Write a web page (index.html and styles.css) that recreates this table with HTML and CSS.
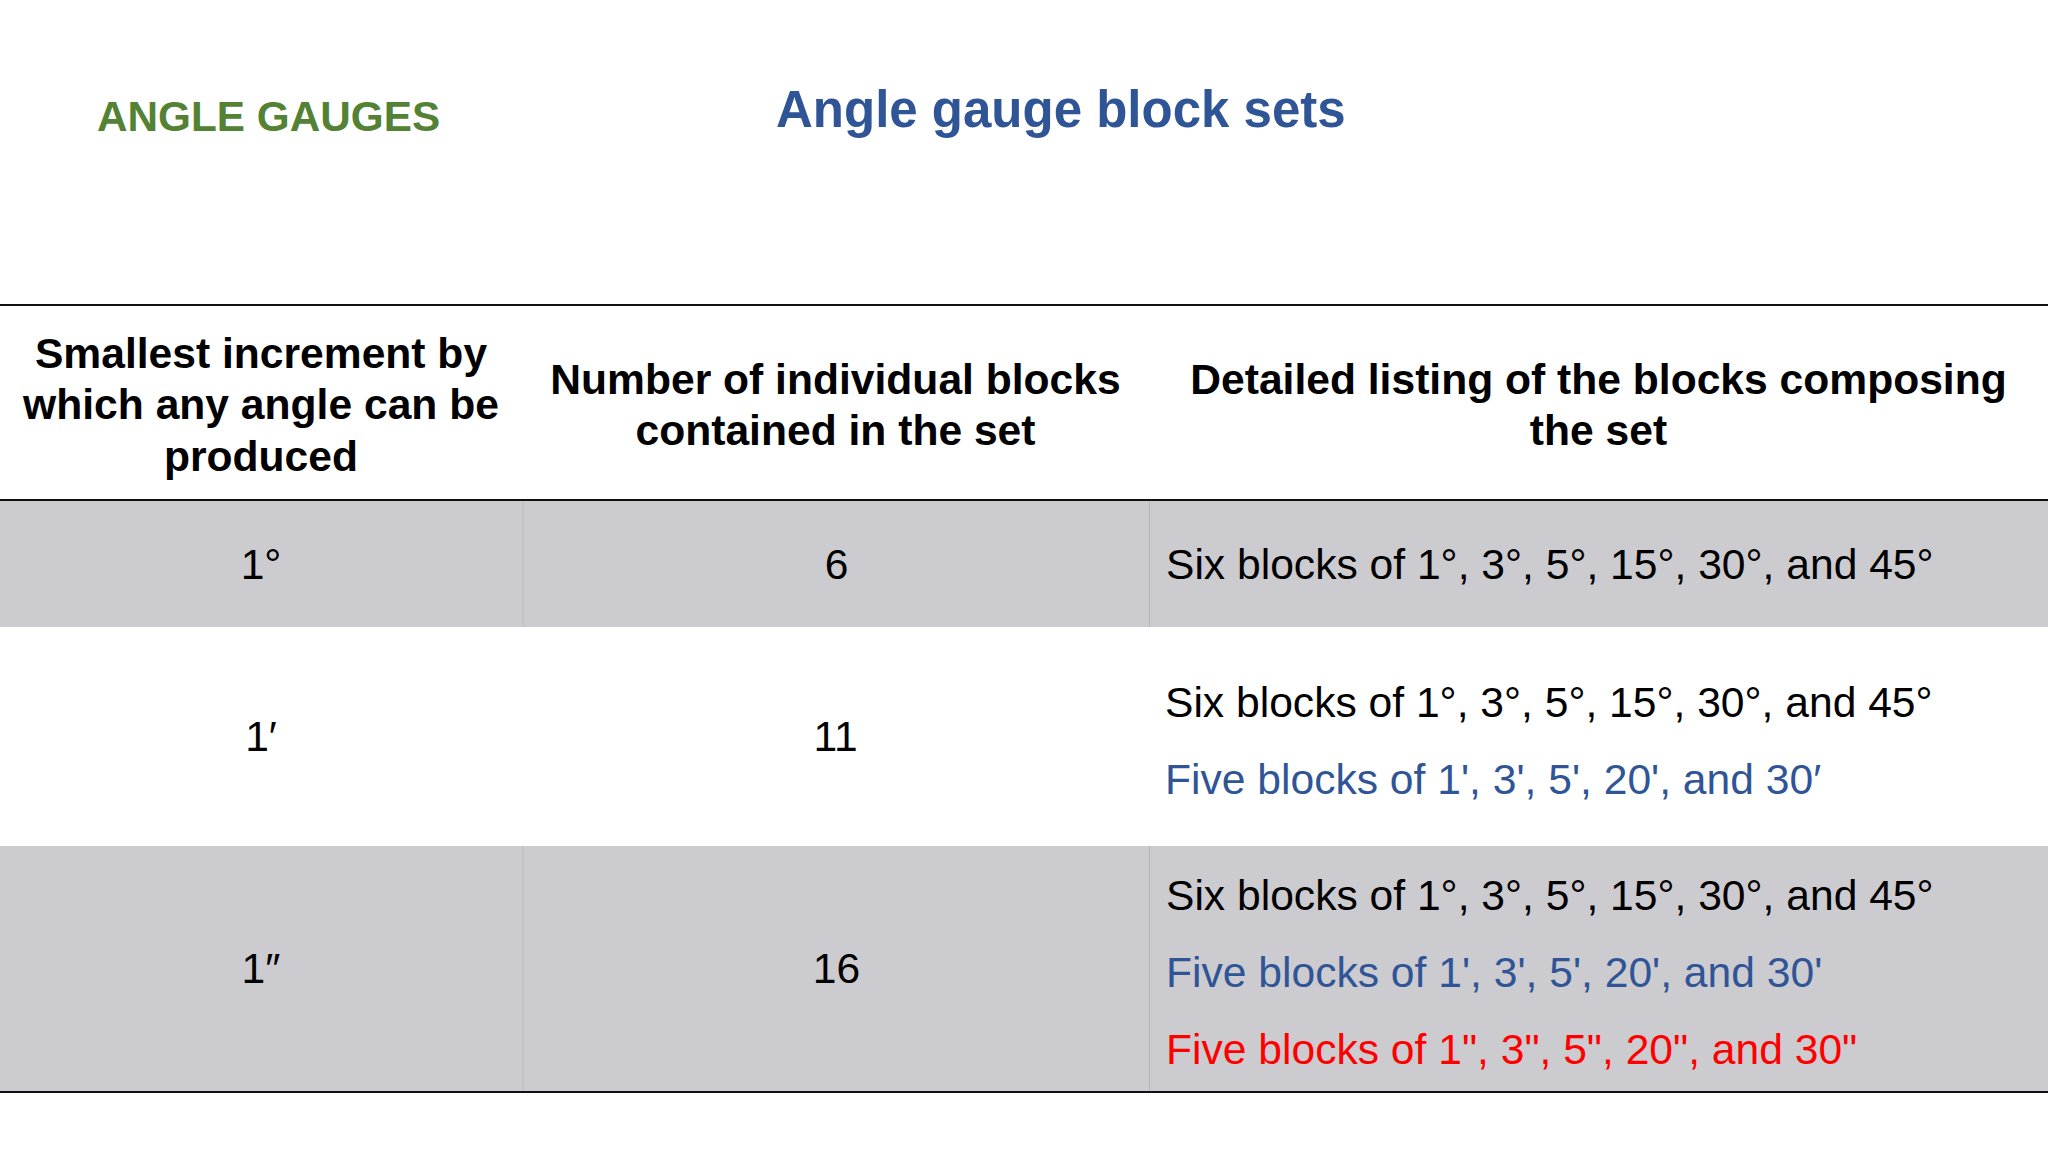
FILE: index.html
```html
<!DOCTYPE html>
<html lang="en">
<head>
<meta charset="utf-8">
<title>Angle gauge block sets</title>
<link rel="stylesheet" href="styles.css">
</head>
<body>
<div class="slide">
  <header class="top">
    <div class="section-label">ANGLE GAUGES</div>
    <h1 class="title">Angle gauge block sets</h1>
  </header>
  <div class="table">
    <div class="row head">
      <div class="cell c1"><span>Smallest increment by which any angle can be produced</span></div>
      <div class="cell c2"><span>Number of individual blocks contained in the set</span></div>
      <div class="cell c3 center"><span>Detailed listing of the blocks composing the set</span></div>
    </div>
    <div class="row shaded r1">
      <div class="cell c1">1°</div>
      <div class="cell c2 sep">6</div>
      <div class="cell c3 sep2 list">
        <div class="black">Six blocks of 1°, 3°, 5°, 15°, 30°, and 45°</div>
      </div>
    </div>
    <div class="row r2">
      <div class="cell c1">1′</div>
      <div class="cell c2">11</div>
      <div class="cell c3 list">
        <div class="black">Six blocks of 1°, 3°, 5°, 15°, 30°, and 45°</div>
        <div class="blue">Five blocks of 1', 3', 5', 20', and 30′</div>
      </div>
    </div>
    <div class="row shaded r3">
      <div class="cell c1">1″</div>
      <div class="cell c2 sep">16</div>
      <div class="cell c3 sep2 list">
        <div class="black">Six blocks of 1°, 3°, 5°, 15°, 30°, and 45°</div>
        <div class="blue">Five blocks of 1', 3', 5', 20', and 30'</div>
        <div class="red">Five blocks of 1", 3", 5", 20", and 30"</div>
      </div>
    </div>
  </div>
</div>
</body>
</html>
```

FILE: styles.css
```css
* { box-sizing: border-box; }
html, body {
  margin: 0;
  padding: 0;
  background: #ffffff;
}
body {
  font-family: "Liberation Sans", Arial, sans-serif;
  color: #000;
}
.slide {
  width: 2048px;
  height: 1152px;
  overflow: hidden;
}
.top {
  height: 304px;
  display: grid;
  grid-template-columns: 776px 1fr;
  align-items: start;
}
.section-label {
  padding-left: 97px;
  padding-top: 95px;
  font-size: 42.3px;
  line-height: 43px;
  font-weight: bold;
  color: #548235;
}
.title {
  margin: 0;
  padding-top: 84px;
  font-size: 51px;
  line-height: 51px;
  font-weight: bold;
  color: #2f5597;
}
.table {
  border-top: 2px solid #111;
  border-bottom: 2px solid #111;
}
.row {
  display: grid;
  grid-template-columns: 522px 627px 1fr;
}
.row.head {
  height: 195px;
  border-bottom: 2px solid #111;
  font-weight: bold;
  font-size: 42.6px;
  line-height: 51.5px;
  padding-top: 5px;
}
.row.shaded { background: #cccbcf; }
.r1 { height: 126px; }
.r2 { height: 219px; }
.r3 { height: 245px; }
.cell {
  display: flex;
  flex-direction: column;
  justify-content: center;
  align-items: center;
  text-align: center;
  font-size: 42.6px;
}
.head .cell { padding: 0 12px; }
.sep { border-left: 2px solid #c4c3c7; }
.sep2 { border-left: 1px solid #b4b3b7; }
.list {
  align-items: flex-start;
  text-align: left;
  padding-left: 16px;
  line-height: 77px;
  padding-top: 8px;
}
.r1 .list { padding-top: 0; }
.head .c3.center { align-items: center; text-align: center; }
.black { color: #000; }
.blue { color: #2f5597; }
.red { color: #ff0000; }
```
